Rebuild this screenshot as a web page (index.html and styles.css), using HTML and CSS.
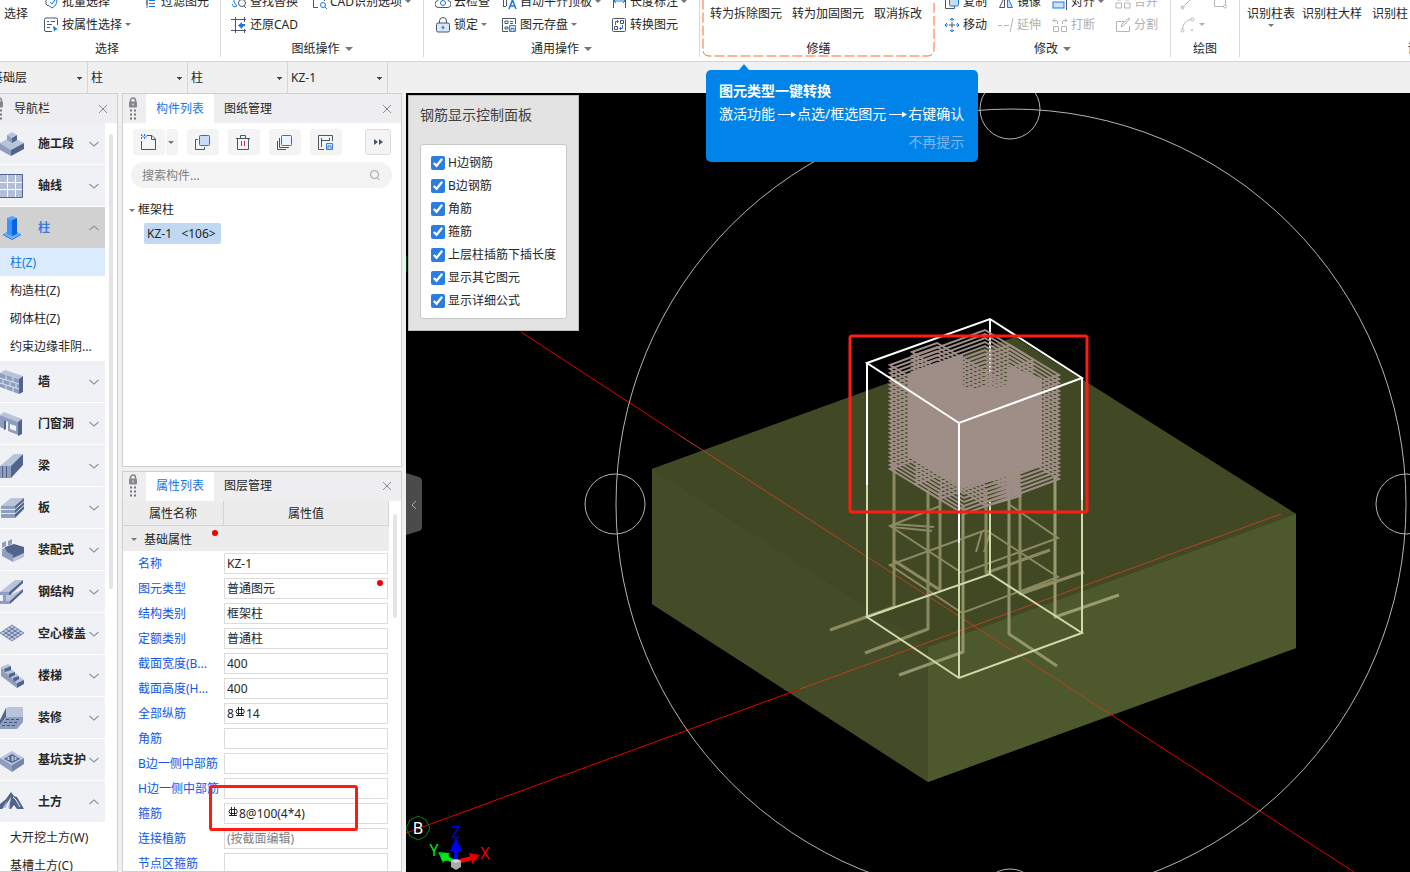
FILE: index.html
```html
<!DOCTYPE html>
<html lang="zh-CN">
<head>
  <meta charset="UTF-8">
  <meta name="viewport" content="width=device-width, initial-scale=1.0">
  <title>钢筋三维 - KZ-1</title>
  <link rel="stylesheet" href="styles.css">
</head>
<body>
  <!-- shared icons -->
  <svg class="sprite" aria-hidden="true">
    <symbol id="i-batch" viewBox="0 0 16 16"><path d="M3 4v6l2 2M5 3h4" stroke="#4a5568"/><path d="M13 4c2 4 0 8-4 10l-4-3M7 8l2 2 3-4" stroke="#1677e8"/></symbol>
    <symbol id="i-attr" viewBox="0 0 16 16"><path d="M9 14.500H3A1.500 1.500 0 0 1 1.500 13V2.500A1.500 1.500 0 0 1 3 1h10a1.500 1.500 0 0 1 1.500 1.500V8M4 4.500h2M8 4.500h4M4 7.500h5M4 10.500h3" stroke="#4a5568"/><path d="M10 8.500l5 4-2.500.3L11 15z" fill="#1677e8"/></symbol>
    <symbol id="i-filter" viewBox="0 0 16 16"><path d="M5 2v12M7 6.500h6M7 9.500h6M7 12.500h6" stroke="#1677e8"/><path d="M5 1v10" stroke="#4a5568"/></symbol>
    <symbol id="i-find" viewBox="0 0 16 16"><path d="M3 4v4l3 4M1 10l2 3 3-1" stroke="#1677e8"/><circle cx="11" cy="9" r="3.500" stroke="#4a5568"/><path d="M13 12l2 2" stroke="#4a5568"/></symbol>
    <symbol id="i-cad" viewBox="0 0 16 16"><path d="M7 13.500H2.500v-11h11V7" stroke="#4a5568"/><circle cx="12" cy="11" r="2.500" stroke="#1677e8"/><path d="M14 13l2 2" stroke="#1677e8"/></symbol>
    <symbol id="i-restore" viewBox="0 0 16 16"><path d="M4.500 0v16M0 2.500h15M0 13.500h15M13.500 0v5M13.500 12v4" stroke="#4a5568"/><path d="M7 8.500L11 5v2h3v2c-2 0-3 1-3 3z" fill="#1677e8"/></symbol>
    <symbol id="i-cloud" viewBox="0 0 16 16"><path d="M4 13.500a3.500 3.500 0 0 1-1-7 5 5 0 0 1 10 0 3.500 3.500 0 0 1-1 7z" stroke="#4a5568"/><circle cx="8" cy="9" r="2.500" stroke="#1677e8"/></symbol>
    <symbol id="i-lock" viewBox="0 0 16 16"><path d="M4.500 6V4a3.500 3.500 0 0 1 7 0v2" stroke="#4a5568"/><rect x="1.500" y="6" width="13" height="9" rx="1.500" fill="#d9e8fb" stroke="#4a5568"/><path d="M8 8.500v4M6.500 10.500h3" stroke="#1677e8"/></symbol>
    <symbol id="i-auto" viewBox="0 0 16 16"><path d="M2.500 5v7M2 12.500h3M5.500 6v6" stroke="#4a5568"/><path d="M8 15l3.500-9L15 15M9 12h5" stroke="#1677e8" stroke-width="1.500"/></symbol>
    <symbol id="i-save" viewBox="0 0 16 16"><path d="M7 14.500H1.500v-13h13V7M4 4h3v2.500H4zM4 10h3v2H4zM9 4.500h3M9 6.500h3" stroke="#4a5568"/><path d="M8.500 8.500h6v6h-6zM10 14v-2.500h3V14" fill="#cfe2fb" stroke="#3f7fd6"/></symbol>
    <symbol id="i-dim" viewBox="0 0 16 16"><path d="M2.500 3v11M14.500 3v11" stroke="#4a5568"/><path d="M3 7h11M5 5L3 7l2 2M12 5l2 2-2 2" stroke="#1677e8"/></symbol>
    <symbol id="i-convert" viewBox="0 0 16 16"><rect x="1.500" y="1.500" width="13" height="13" rx="1" stroke="#4a5568"/><path d="M9.500 3.500h3v3h-3zM3.500 9.500h3v3h-3z" stroke="#4a5568"/><path d="M4.500 8V4.500H7M6 3l1.500 1.500L6 6M11.500 8v3.500H9M10 10l-1.500 1.500L10 13" stroke="#1677e8"/></symbol>
    <symbol id="i-copy" viewBox="0 0 16 16"><path d="M5 5H1.500v9.500h9V12" stroke="#4a5568"/><rect x="5.500" y="3" width="9" height="9" rx="1.500" fill="#c9dcf8" stroke="#1677e8"/></symbol>
    <symbol id="i-move" viewBox="0 0 16 16"><path d="M8 5v6M5 8h6" stroke="#4a5568"/><path d="M8 1v3M8 12v3M1 8h3M12 8h3M6 3l2-2 2 2M6 13l2 2 2-2M3 6L1 8l2 2M13 6l2 2-2 2" stroke="#1677e8"/></symbol>
    <symbol id="i-mirror" viewBox="0 0 16 16"><path d="M6.500 3v10.500H1.500z" stroke="#4a5568"/><path d="M9.500 3v10.500h5z" fill="#cfe2fb" stroke="#1677e8"/></symbol>
    <symbol id="i-align" viewBox="0 0 16 16"><path d="M14.500 1v15" stroke="#4a5568"/><rect x="1" y="8" width="11" height="6" fill="#cfe2fb" stroke="#1677e8"/><path d="M5 5h7" stroke="#4a5568"/></symbol>
    <symbol id="i-merge" viewBox="0 0 16 16"><path d="M1 9h5.500v5H1zM9.500 9H15v5H9.500zM2 6h4M10 6h4" stroke="#b5b5b5"/></symbol>
    <symbol id="i-extend" viewBox="0 0 16 16"><path d="M0 8.500h4M6 8.500h5M15 1l-3 14" stroke="#b5b5b5"/></symbol>
    <symbol id="i-break" viewBox="0 0 16 16"><path d="M1.500 9.500h5v5h-5zM9.500 9.500h5v5h-5zM1 3.500h4M3 1.500l-2 2 2 2M5.500 7V4M11 3.500h4M13 1.500l2 2-2 2M10.500 7V4" stroke="#b5b5b5"/></symbol>
    <symbol id="i-split" viewBox="0 0 16 16"><path d="M9 4.500H1.500v10h13V9M6 10l1-3 7-6 1 1-6 6z" stroke="#b5b5b5"/></symbol>
    <symbol id="i-line" viewBox="0 0 16 16"><path d="M2 14L12 4" stroke="#b5b5b5"/><circle cx="2.500" cy="13.500" r="1.500" stroke="#b5b5b5"/></symbol>
    <symbol id="i-rect" viewBox="0 0 16 16"><path d="M2.500 3v9.500h11V3" stroke="#b5b5b5"/><circle cx="13" cy="12.500" r="1.500" fill="#fff" stroke="#b5b5b5"/></symbol>
    <symbol id="i-arc" viewBox="0 0 16 16"><path d="M2.500 12C3 7 6 3 11 2.500" stroke="#b5b5b5"/><circle cx="2.500" cy="13.500" r="1.500" stroke="#b5b5b5"/><circle cx="12.500" cy="2.500" r="1.500" stroke="#b5b5b5"/><circle cx="12" cy="13" r="1" fill="#b5b5b5"/></symbol>
    <symbol id="i-grip" viewBox="0 0 10 24"><path d="M2.500 5V3.500a2.500 2.500 0 0 1 5 0V5" stroke="#85878c" stroke-width="1.500"/><rect x="1" y="4.500" width="8" height="6" rx="1" fill="#85878c"/><path d="M5 6.500v2" stroke="#fff"/><path d="M2 13.500h2M6 13.500h2M2 17.500h2M6 17.500h2M2 21.500h2M6 21.500h2" stroke="#777" stroke-width="2"/></symbol>
    <symbol id="i-close" viewBox="0 0 10 10"><path d="M1 1l8 8M9 1L1 9" stroke="#8c8c8c"/></symbol>
    <symbol id="i-down" viewBox="0 0 10 6"><path d="M.5 1L5 5l4.500-4" stroke="#8c99b4" stroke-width="1.300"/></symbol>
    <symbol id="i-up" viewBox="0 0 10 6"><path d="M.5 5L5 1l4.500 4" stroke="#8c99b4" stroke-width="1.300"/></symbol>
    <symbol id="i-rebar" viewBox="0 0 10 10"><path d="M3.500 0v8M6.500 0v8M2 2.500h6.500M2 2.500Q0 4.500 2 6.500h6.500Q10 4.500 8.500 2.500M1 8.500h8" stroke="#222"/></symbol>
    <symbol id="i-arrow" viewBox="0 0 18 14"><path d="M0 7.500h14" stroke="#fff"/><path d="M13 4.500l5 3-5 3z" fill="#fff"/></symbol>
  </svg>

  <header class="ribbon">
    <section class="group group-select">
      <div class="group-body">
        <button class="big">选择</button>
        <div class="tools">
          <button><svg><use href="#i-batch"/></svg>批量选择</button>
          <button><svg><use href="#i-filter"/></svg>过滤图元</button>
          <button><svg><use href="#i-attr"/></svg>按属性选择<i class="caret"></i></button>
        </div>
      </div>
      <h2>选择</h2>
    </section>
    <section class="group group-drawing">
      <div class="group-body">
        <div class="tools">
          <button><svg><use href="#i-find"/></svg>查找替换</button>
          <button><svg><use href="#i-cad"/></svg>CAD识别选项<i class="caret"></i></button>
          <button><svg><use href="#i-restore"/></svg>还原CAD</button>
        </div>
      </div>
      <h2>图纸操作<i class="caret caret-lg"></i></h2>
    </section>
    <section class="group group-common">
      <div class="group-body">
        <div class="tools">
          <button><svg><use href="#i-cloud"/></svg>云检查</button>
          <button><svg><use href="#i-auto"/></svg>自动平齐顶板<i class="caret"></i></button>
          <button><svg><use href="#i-dim"/></svg>长度标注<i class="caret"></i></button>
          <button><svg><use href="#i-lock"/></svg>锁定<i class="caret"></i></button>
          <button><svg><use href="#i-save"/></svg>图元存盘<i class="caret"></i></button>
          <button><svg><use href="#i-convert"/></svg>转换图元</button>
        </div>
      </div>
      <h2>通用操作<i class="caret caret-lg"></i></h2>
    </section>
    <section class="group group-repair">
      <svg class="dash"><rect x="1" y="1" rx="6"/></svg>
      <div class="group-body">
        <button class="big">转为拆除图元</button>
        <button class="big">转为加固图元</button>
        <button class="big">取消拆改</button>
      </div>
      <h2>修缮</h2>
    </section>
    <section class="group group-modify">
      <div class="group-body">
        <div class="tools">
          <button><svg><use href="#i-copy"/></svg>复制</button>
          <button><svg><use href="#i-mirror"/></svg>镜像</button>
          <button><svg><use href="#i-align"/></svg>对齐<i class="caret"></i></button>
          <button disabled><svg><use href="#i-merge"/></svg>合并</button>
          <button><svg><use href="#i-move"/></svg>移动</button>
          <button disabled><svg><use href="#i-extend"/></svg>延伸</button>
          <button disabled><svg><use href="#i-break"/></svg>打断</button>
          <button disabled><svg><use href="#i-split"/></svg>分割</button>
        </div>
      </div>
      <h2>修改<i class="caret caret-lg"></i></h2>
    </section>
    <section class="group group-draw">
      <div class="group-body">
        <div class="tools">
          <button disabled aria-label="直线"><svg><use href="#i-line"/></svg></button>
          <button disabled aria-label="矩形"><svg><use href="#i-rect"/></svg></button>
          <button disabled aria-label="圆弧"><svg><use href="#i-arc"/></svg><i class="caret"></i></button>
        </div>
      </div>
      <h2>绘图</h2>
    </section>
    <section class="group group-detect">
      <div class="group-body">
        <button class="big has-menu">识别柱表<i class="caret"></i></button>
        <button class="big">识别柱大样</button>
        <button class="big last">识别柱</button>
      </div>
      <h2>识别柱</h2>
    </section>
  </header>

  <div class="filters">
    <select aria-label="楼层"><option>基础层</option></select>
    <select aria-label="构件大类"><option>柱</option></select>
    <select aria-label="构件类型"><option>柱</option></select>
    <select aria-label="构件"><option>KZ-1</option></select>
  </div>

  <main>
    <nav class="nav">
      <div class="panel-head nav-head">
        <svg class="grip"><use href="#i-grip"/></svg>
        <span class="nav-title">导航栏</span>
        <button class="close" aria-label="关闭"><svg><use href="#i-close"/></svg></button>
      </div>
      <div class="nav-scroll">
        <div class="nav-list">
          <button class="cat"><svg class="pic" viewBox="0 0 24 24"><path d="M0 11l11-6 13 6-13 7z" fill="#b9c3d9"/><path d="M0 11l11 7v6L0 18z" fill="#8f9ebf"/><path d="M24 11l-13 7v6l13-7z" fill="#50648c"/><path d="M7 3l5-3 5 3-5 3z" fill="#b9c3d9"/><path d="M7 3l5 3v5L7 8z" fill="#8f9ebf"/><path d="M17 3l-5 3v5l5-3z" fill="#50648c"/></svg><span>施工段</span><svg class="chev"><use href="#i-down"/></svg></button>
          <button class="cat"><svg class="pic" viewBox="0 0 24 24"><path d="M0 0h23v24H0z" fill="#b3bfd8"/><path d="M7.500 0v23M15.500 0v23M0 8.500h22M0 15.500h22" stroke="#fff"/><path d="M0 .5h22.500v23H0" stroke="#50648c" fill="none"/></svg><span>轴线</span><svg class="chev"><use href="#i-down"/></svg></button>
          <button class="cat active"><svg class="pic" viewBox="0 0 24 24"><path d="M3 18l9-5 9 5-9 5z" fill="#68b0ff"/><path d="M3 18l9 5 9-5v1l-9 5-9-5z" fill="#1473e6"/><path d="M7 2l5-2 5 2-5 2z" fill="#55a5ff"/><path d="M7 2l5 2v16l-5-2z" fill="#3a94ff"/><path d="M17 2l-5 2v16l5-2z" fill="#0d65dc"/></svg><span>柱</span><svg class="chev"><use href="#i-up"/></svg></button>
          <a href="#" class="sub current">柱(Z)</a>
          <a href="#" class="sub">构造柱(Z)</a>
          <a href="#" class="sub">砌体柱(Z)</a>
          <a href="#" class="sub">约束边缘非阴...</a>
          <button class="cat"><svg class="pic" viewBox="0 0 24 24"><path d="M0 3l5-3 18 6-4 3z" fill="#b9c3d9"/><path d="M0 3l19 6v15L0 17z" fill="#8f9ebf"/><path d="M23 6l-4 3v15l4-2z" fill="#50648c"/><path d="M0 8l19 6M0 13l19 6M6 5v5M13 7v5M3 9v5M10 12v5M16 14v4M6 15v5M13 17v5" stroke="#dbe1ee" fill="none"/></svg><span>墙</span><svg class="chev"><use href="#i-down"/></svg></button>
          <button class="cat"><svg class="pic" viewBox="0 0 24 24"><path d="M0 3l4-3 18 7-4 3z" fill="#b9c3d9"/><path d="M0 3l18 7v13L8 19v-9l-4-2v9l-4-2z" fill="#8f9ebf"/><path d="M22 7l-4 3v14l4-2z" fill="#50648c"/><path d="M10 12l6 2v5l-6-2z" fill="#eff1f6"/><path d="M4 8l2 1v8l-2 1z" fill="#50648c"/></svg><span>门窗洞</span><svg class="chev"><use href="#i-down"/></svg></button>
          <button class="cat"><svg class="pic" viewBox="0 0 24 24"><path d="M0 12L14 0h9L11 12z" fill="#b9c3d9"/><path d="M11 12L23 0v11L11 24z" fill="#50648c"/><path d="M0 12h11v12H0z" fill="#8f9ebf"/><path d="M2.500 12v12M6.500 12v12" stroke="#50648c"/></svg><span>梁</span><svg class="chev"><use href="#i-down"/></svg></button>
          <button class="cat"><svg class="pic" viewBox="0 0 24 24"><path d="M1 10l10-8h13l-9 8z" fill="#b9c3d9"/><path d="M1 10h14v12H1z" fill="#8f9ebf"/><path d="M15 10l9-8v11l-9 9z" fill="#50648c"/><path d="M1 13.500h14l9-8M1 17.500h14l9-8" stroke="#e6eaf3" fill="none"/></svg><span>板</span><svg class="chev"><use href="#i-down"/></svg></button>
          <button class="cat"><svg class="pic" viewBox="0 0 24 24"><path d="M5 9l9-3 10 3v8l-11 4-9-6z" fill="#50648c"/><path d="M2 11l3-1 2 4 6 3v7L2 18z" fill="#8f9ebf"/><path d="M13 20l11-5v4l-11 5z" fill="#b9c3d9"/><path d="M2 5l4-2v5l-4 2zM8 3l4-2v5L8 8z" fill="#8f9ebf"/></svg><span>装配式</span><svg class="chev"><use href="#i-down"/></svg></button>
          <button class="cat"><svg class="pic" viewBox="0 0 24 24"><path d="M0 12L15 0h8L8 13z" fill="#b9c3d9"/><path d="M8 13L23 0v3L11 14v1H8z" fill="#50648c"/><path d="M6 15h4L23 9l-13 13H6z" fill="#b9c3d9"/><path d="M0 12h9v3H6v6h4v3H0v-3h3v-6H0z" fill="#8f9ebf"/><path d="M23 9v3L10 24v-3z" fill="#50648c"/></svg><span>钢结构</span><svg class="chev"><use href="#i-down"/></svg></button>
          <button class="cat"><svg class="pic" viewBox="0 0 24 24"><path d="M0 11l12-8 12 8-12 8z" fill="#b9c3d9" stroke="#8492b3"/><path d="M3 9l12 8M6 7l12 8M9 5l12 8M3 13l12-8M6 15l12-8M9 17l12-8" stroke="#64759c" fill="none"/></svg><span>空心楼盖</span><svg class="chev"><use href="#i-down"/></svg></button>
          <button class="cat"><svg class="pic" viewBox="0 0 24 24"><path d="M1 3l2 2 4 4 4 4 4 4 2 2v5L1 12z" fill="#8f9ebf"/><path d="M1 3l7-3 3 2-7 4zM4 8l7-3 4 3-6 3zM9 12l7-3 3 3-6 3zM13 16l7-3 4 3-7 3z" fill="#b9c3d9"/><path d="M4 5l7-3v4L5 8zM9 10l6-2v3l-6 3zM13 14l6-2v3l-5 3zM17 19l7-3v4l-7 4z" fill="#50648c"/></svg><span>楼梯</span><svg class="chev"><use href="#i-down"/></svg></button>
          <button class="cat"><svg class="pic" viewBox="0 0 24 24"><path d="M5 3l3-2h15v11H5z" fill="#b9c3d9"/><path d="M6 2v9l-6 8v-5z" fill="#50648c"/><path d="M0 19l6-8h17v5l-6 7H0z" fill="#8f9ebf"/><path d="M6 13.500h3M11 13.500h3M16 13.500h3M4 16.500h3M9 16.500h3M14 16.500h3M2 19.500h3M7 19.500h3M12 19.500h3" stroke="#3f527c"/></svg><span>装修</span><svg class="chev"><use href="#i-down"/></svg></button>
          <button class="cat"><svg class="pic" viewBox="0 0 24 24"><path d="M0 10l12-7 12 7-12 7z" fill="#b9c3d9"/><path d="M0 10l12 7v7L0 16z" fill="#8f9ebf"/><path d="M24 10l-12 7v7l12-8z" fill="#7384a9"/><path d="M4 11l8-5 8 5-8 4z" fill="#50648c"/><path d="M8.500 12V9M12.500 13V8M15.500 12V9" stroke="#b9c3d9" stroke-width="2"/></svg><span>基坑支护</span><svg class="chev"><use href="#i-down"/></svg></button>
          <button class="cat"><svg class="pic" viewBox="0 0 24 24"><path d="M0 14l6-5 5-7 3 4 3 1 7 12h-7l-3-4-3 4H9l2-12-5 8-4 4H0z" fill="#50648c"/><path d="M3 17l4-6-1 7zM8 18l2-8v9z" fill="#a9b5ce"/><path d="M13 7l3 3 4 7" stroke="#eff1f6" fill="none"/></svg><span>土方</span><svg class="chev"><use href="#i-up"/></svg></button>
          <a href="#" class="sub">大开挖土方(W)</a>
          <a href="#" class="sub">基槽土方(C)</a>
        </div>
        <div class="scroll-thumb"></div>
      </div>
    </nav>

    <div class="panels">
      <section class="panel components">
        <div class="panel-head">
          <svg class="grip"><use href="#i-grip"/></svg>
          <button class="tab selected">构件列表</button>
          <button class="tab">图纸管理</button>
          <button class="close" aria-label="关闭"><svg><use href="#i-close"/></svg></button>
        </div>
        <div class="toolbar">
          <div class="split">
            <button aria-label="新建"><svg viewBox="0 0 16 16"><path d="M1.500 7v8.500h14V5L12 1.500H7M11.500 1.500v4h4" stroke="#4a5568"/><path d="M1 1h1M4 1h1M2.500 2.500h1M1 4h1M4 4h1M5.500 2.500h1" stroke="#1677e8" stroke-width="2"/></svg></button>
            <button class="more" aria-label="新建选项"><i class="caret"></i></button>
          </div>
          <button aria-label="复制"><svg viewBox="0 0 16 16"><path d="M4 5.500H1.500v10h9V13" stroke="#4a5568"/><rect x="5.500" y="1.500" width="10" height="10" rx="1" fill="#c9dcf8" stroke="#1677e8"/></svg></button>
          <button aria-label="删除"><svg viewBox="0 0 16 16"><path d="M1 4.500h14M5.500 4V1.500h5V4M2.500 5v10.500h11V5" stroke="#4a5568"/><path d="M6.500 7v5M9.500 7v5" stroke="#d9232e"/></svg></button>
          <button aria-label="层间复制"><svg viewBox="0 0 16 16"><path d="M3.500 4v9.500H13M1.500 7v8.500H10" stroke="#4a5568"/><rect x="5.500" y="1.500" width="10" height="10" rx="1" fill="#eaf3ff" stroke="#1677e8"/></svg></button>
          <button aria-label="存档"><svg viewBox="0 0 16 16"><path d="M7 15.500H1.500v-14h14V7M4.500 4v9M4.500 6.500h8M12.500 4v3" stroke="#4a5568"/><path d="M9.500 9.500h6v6h-6zM11 15v-3h3v3" fill="#cfe2fb" stroke="#3f7fd6"/></svg></button>
          <button class="expand" aria-label="更多"><svg viewBox="0 0 16 16"><path d="M4 5l4 3-4 3zM9 5l4 3-4 3z" fill="#4a5568"/></svg></button>
        </div>
        <div class="search">
          <input type="text" placeholder="搜索构件..." aria-label="搜索构件">
          <svg viewBox="0 0 12 12"><circle cx="5.500" cy="5.500" r="4" stroke="#999"/><path d="M8 8.500l2.500 2.500" stroke="#999"/></svg>
        </div>
        <ul class="tree">
          <li><i class="caret"></i>框架柱
            <ul><li><button>KZ-1 &nbsp;&nbsp;&lt;106&gt;</button></li></ul>
          </li>
        </ul>
      </section>

      <section class="panel props">
        <div class="panel-head">
          <svg class="grip"><use href="#i-grip"/></svg>
          <button class="tab selected">属性列表</button>
          <button class="tab">图层管理</button>
          <button class="close" aria-label="关闭"><svg><use href="#i-close"/></svg></button>
        </div>
        <div class="props-scroll">
          <table>
            <thead>
              <tr><th>属性名称</th><th>属性值</th></tr>
            </thead>
            <tbody>
              <tr class="section"><td colspan="2"><i class="caret"></i>基础属性<b class="dot"></b></td></tr>
              <tr><td><label for="p1">名称</label></td><td><div class="field"><input id="p1" value="KZ-1"></div></td></tr>
              <tr><td><label for="p2">图元类型</label></td><td><div class="field"><input id="p2" value="普通图元"><b class="dot"></b></div></td></tr>
              <tr><td><label for="p3">结构类别</label></td><td><div class="field"><input id="p3" value="框架柱"></div></td></tr>
              <tr><td><label for="p4">定额类别</label></td><td><div class="field"><input id="p4" value="普通柱"></div></td></tr>
              <tr><td><label for="p5">截面宽度(B...</label></td><td><div class="field"><input id="p5" value="400"></div></td></tr>
              <tr><td><label for="p6">截面高度(H...</label></td><td><div class="field"><input id="p6" value="400"></div></td></tr>
              <tr><td><label for="p7">全部纵筋</label></td><td><div class="field">8<svg class="rebar"><use href="#i-rebar"/></svg><input id="p7" value="14"></div></td></tr>
              <tr><td><label for="p8">角筋</label></td><td><div class="field"><input id="p8"></div></td></tr>
              <tr><td><label for="p9">B边一侧中部筋</label></td><td><div class="field"><input id="p9"></div></td></tr>
              <tr><td><label for="p10">H边一侧中部筋</label></td><td><div class="field"><input id="p10"></div></td></tr>
              <tr><td><label for="p11">箍筋</label></td><td class="marked"><div class="field"><svg class="rebar"><use href="#i-rebar"/></svg><input id="p11" value="8@100(4*4)"></div></td></tr>
              <tr><td><label for="p12">连接植筋</label></td><td><div class="field"><input id="p12" placeholder="(按截面编辑)"></div></td></tr>
              <tr><td><label for="p13">节点区箍筋</label></td><td><div class="field"><input id="p13"></div></td></tr>
            </tbody>
          </table>
          <div class="scroll-thumb"></div>
        </div>
      </section>
    </div>

    <div class="viewport">
      <svg class="scene" viewBox="406 93 1004 779" preserveAspectRatio="xMinYMin slice" fill="none">
        <!-- foundation -->
        <path d="M652 469L1015 337L1296 514V648L928 782L652 604z" fill="#424a26"/>
        <path d="M652 469L1015 337L1296 514L928 647z" fill="#404924"/>
        <path d="M652 469L928 647V782L652 604z" fill="#434b27"/>
        <path d="M928 647L1296 514V648L928 782z" fill="#4d582d"/>

        <!-- axes -->
        <g stroke="#e60000">
          <path d="M406 833L800 689M521 332L679 435"/>
          <path d="M1110 714L1354 872"/>
        </g>
        <path d="M800 689L1281 514M679 435L1110 714" stroke="#b5431f"/>
        <path d="M652 604L928 782V700L652 560z" fill="#434b27" opacity="0"/>

        <!-- orbit -->
        <g stroke="#b4b4b4">
          <circle cx="1011" cy="504" r="395"/>
          <circle cx="615" cy="504" r="30"/>
          <circle cx="1010" cy="109" r="30"/>
          <circle cx="1406" cy="504" r="30"/>
          <circle cx="1010" cy="899" r="30"/>
        </g>

        <!-- longitudinal bars -->
        <g stroke="#8c8a60" stroke-width="3" stroke-linejoin="round">
          <path d="M894 465V607L830 630"/>
          <path d="M928 490V629L865 653"/>
          <path d="M940 490V590L893 560"/>
          <path d="M986 490V573L1050 550"/>
          <path d="M1020 490V594L1084 572"/>
          <path d="M963 505V652L899 675" stroke="#92946a"/>
          <path d="M1009 490V634L1057 666" stroke="#92946a"/>
          <path d="M1055 475V617L1119 595" stroke="#989b6c"/>
        </g>
        <g stroke="#8c8a60" stroke-width="2">
          <path d="M940 506L890 526L962 573L1058 538L1010 505"/>
          <path d="M986 530L890 565L962 613L1058 577z"/>
          <path d="M892 524L934 527M892 527L932 531M982 531L976 552M990 533L984 552M1020 592L1058 580"/>
        </g>

        <!-- column outline -->
        <g stroke="#cddbaa" stroke-width="2">
          <path d="M867 617L990 574L1082 633L959 678z"/>
          <path d="M867 480V617M1082 490V633M959 520V678M990 500V574"/>
        </g>
        <path d="M990 319V400" stroke="#fff" stroke-width="2"/>

        <!-- stirrups, filled in by the script below -->
        <path d="M908 374L963 354V388H1007V366L1042 378V466L963 488L908 455z" fill="#9f8e87"/>
        <g id="stirrups" stroke="#9f8e87" stroke-width="2"></g>

        <g stroke="#fff" stroke-width="2">
          <path d="M867 363L990 319L1082 378L959 423z"/>
          <path d="M867 363V485M1082 378V500M959 423V543"/>
        </g>

        <rect x="850" y="336" width="237" height="176" rx="2" stroke="#ff1a12" stroke-width="3"/>

        <!-- grid bubble and axis triad -->
        <path d="M406 256v16" stroke="#0a7d18"/>
        <path d="M418 816l8 4 4 8-4 8-8 4-8-4-4-8 4-8z" stroke="#0a7d18"/>
        <text x="418" y="834" class="bubble">B</text>
        <path d="M456 862L444 857" stroke="#00e818" stroke-width="4"/>
        <path d="M438 852l12 1-7 10z" fill="#00c814"/>
        <circle cx="445" cy="857" r="4" fill="#00e818"/>
        <path d="M456 862L472 858" stroke="#f00" stroke-width="4"/>
        <path d="M480 855l-11-2 3 11z" fill="#e00000"/>
        <path d="M456 862V850" stroke="#00f" stroke-width="4"/>
        <path d="M456 837l6 14h-12z" fill="#0000f0"/>
        <path d="M451 861l5-2 5 2v6l-5 3-5-3z" fill="#aaa"/>
        <path d="M451 861l5 2 5-2-5-2z" fill="#d4d4d4"/>
        <text x="456" y="838" class="axis axis-z">Z</text>
        <text x="434" y="856" class="axis axis-y">Y</text>
        <text x="485" y="859" class="axis axis-x">X</text>
      </svg>

      <button class="handle" aria-label="收起面板"><svg viewBox="0 0 16 62"><path d="M0 0l13 4q3 1 3 4v46q0 3-3 4L0 62z" fill="#4b4b4b"/><path d="M10 28l-4 4 4 4" stroke="#aaa"/></svg></button>

      <fieldset class="rebar-panel">
        <legend>钢筋显示控制面板</legend>
        <div class="checks">
          <label><input type="checkbox" checked>H边钢筋</label>
          <label><input type="checkbox" checked>B边钢筋</label>
          <label><input type="checkbox" checked>角筋</label>
          <label><input type="checkbox" checked>箍筋</label>
          <label><input type="checkbox" checked>上层柱插筋下插长度</label>
          <label><input type="checkbox" checked>显示其它图元</label>
          <label><input type="checkbox" checked>显示详细公式</label>
        </div>
      </fieldset>
    </div>
  </main>

  <aside class="tip">
    <strong>图元类型一键转换</strong>
    <p>激活功能<svg><use href="#i-arrow"/></svg>点选/框选图元<svg><use href="#i-arrow"/></svg>右键确认</p>
    <button>不再提示</button>
  </aside>

  <script>
    // 4x4 stirrup: one outer loop and two inner loops, repeated down the column
    const loops = [
      'M890 365L985 330L1059 375L964 410z',
      'M912 352L937 343L1020 392L986 402z',
      'M915 380L1010 345L1034 360L939 395z'
    ];
    const group = document.getElementById('stirrups');
    for (let i = 0; i < 27; i++) {
      loops.forEach(d => {
        const path = document.createElementNS('http://www.w3.org/2000/svg', 'path');
        path.setAttribute('d', d);
        path.setAttribute('transform', `translate(0 ${i * 4})`);
        group.appendChild(path);
      });
    }
  </script>
</body>
</html>
```

FILE: styles.css
```css
*, *::before, *::after {
  box-sizing: border-box;
}
body {
  margin: 0;
  height: 100vh;
  display: flex;
  flex-direction: column;
  overflow: hidden;
  position: relative;
  background: #fff;
  color: #262626;
  font: 12px/18px "Noto Sans", "Noto Sans CJK SC", sans-serif;
}
button, input, select {
  font: inherit;
  color: inherit;
  border: 0;
  padding: 0;
  margin: 0;
  background: none;
}
button {
  white-space: nowrap;
}
svg {
  fill: none;
  flex: none;
}
.sprite {
  display: none;
}
.caret {
  flex: none;
  width: 0;
  height: 0;
  border: 3px solid transparent;
  border-top-color: #777;
  border-bottom: 0;
}
.caret-lg {
  border-width: 4px 4px 0;
  margin-left: 4px;
}

/* ribbon */
.ribbon {
  flex: none;
  height: 62px;
  display: flex;
  align-items: flex-end;
  overflow: hidden;
  border-bottom: 1px solid #d5d5d5;
}
.group {
  flex: none;
  display: flex;
  flex-direction: column;
  margin-bottom: 4px;
  border-right: 1px solid #d9d9d9;
}
.group h2 {
  height: 21px;
  margin: 0;
  padding-top: 5px;
  display: flex;
  align-items: center;
  justify-content: center;
  gap: 0 1px;
  font-size: 12px;
  font-weight: 400;
}
.group-body {
  height: 46px;
  display: flex;
  align-items: center;
}
.big {
  padding-top: 2px;
}
.tools {
  display: grid;
  grid-auto-rows: 23px;
}
.tools button {
  display: flex;
  align-items: center;
  gap: 3px;
}
.tools svg {
  width: 16px;
  height: 16px;
}
.tools button:disabled {
  color: #b0b0b0;
}
.tools button:disabled .caret {
  border-top-color: #b0b0b0;
}
.group-select {
  width: 221px;
}
.group-select h2 {
  padding-right: 6px;
}
.group-select .group-body {
  padding-left: 4px;
  gap: 15px;
}
.group-select .tools {
  grid-template-columns: 99px auto;
}
.group-drawing {
  width: 203px;
}
.group-drawing .group-body {
  padding-left: 10px;
}
.group-drawing .tools {
  grid-template-columns: 80px auto;
}
.group-common {
  width: 276px;
}
.group-common .group-body {
  padding-left: 11px;
}
.group-common .tools {
  grid-template-columns: 66px 110px auto;
}
.group-repair {
  position: relative;
  width: 233px;
  margin-left: 2px;
  border: 0;
}
.group-repair .group-body {
  padding-left: 8px;
  gap: 10px;
}
.dash {
  position: absolute;
  left: 0;
  top: 0;
  width: 100%;
  height: 100%;
  pointer-events: none;
}
.dash rect {
  width: calc(100% - 2px);
  height: calc(100% - 2px);
  stroke: #ff6a2a;
  stroke-dasharray: 10 3;
}
.group-modify {
  width: 236px;
}
.group-modify .group-body {
  padding-left: 9px;
}
.group-modify .tools {
  grid-template-columns: 54px 54px 63px auto;
}
.group-draw {
  width: 69px;
}
.group-draw .group-body {
  padding-left: 9px;
}
.group-draw .tools {
  grid-template-columns: 32px auto;
}
.group-detect {
  width: 372px;
}
.group-detect .group-body {
  padding-left: 7px;
  gap: 7px;
}
.has-menu {
  position: relative;
}
.has-menu .caret {
  position: absolute;
  left: 21px;
  top: 21px;
}
.last {
  margin-left: 3px;
}

/* filter bar */
.filters {
  flex: none;
  height: 31px;
  display: flex;
  background: #f0f0f0;
}
.filters select {
  appearance: none;
  width: 100px;
  padding: 1px 3px 0;
  border-right: 1px solid #d5d5d5;
  background: linear-gradient(#444, #444) 89px 15px / 5px 1px no-repeat, linear-gradient(#444, #444) 90px 16px / 3px 1px no-repeat, linear-gradient(#444, #444) 91px 17px / 1px 1px no-repeat;
}
.filters select:first-child {
  margin-left: -12px;
}

main {
  flex: 1;
  min-height: 0;
  display: flex;
  background: #f0f0f0;
}
.panel-head {
  flex: none;
  height: 29px;
  display: flex;
  align-items: center;
  background: #eeeef0;
}
.grip {
  width: 10px;
  height: 24px;
}
.close {
  margin-left: auto;
  width: 10px;
  height: 10px;
}
.close svg, .pic, .chev {
  display: block;
}
.close svg {
  width: 10px;
  height: 10px;
}
.scroll-thumb {
  width: 4px;
  border-radius: 2px;
  background: #e4e4e4;
}

/* navigation */
.nav {
  flex: none;
  width: 118px;
  display: flex;
  flex-direction: column;
  overflow: hidden;
  background: #fff;
  border: 1px solid #d0d0d0;
  border-left: 0;
}
.nav-head {
  padding-right: 9px;
}
.nav-head .grip {
  margin-left: -6px;
}
.nav-title {
  margin-left: 10px;
}
.nav-scroll {
  flex: 1;
  min-height: 0;
  display: flex;
  gap: 4px;
}
.nav-scroll .scroll-thumb {
  height: 455px;
  margin-top: 11px;
}
.nav-list {
  width: 105px;
}
.cat {
  width: 100%;
  height: 42px;
  display: flex;
  align-items: center;
  padding-right: 6px;
  border-bottom: 1px solid #fff;
  background: #eff1f5;
  font-weight: 700;
}
.cat span {
  margin: 0 auto 0 14px;
}
.pic {
  width: 24px;
  height: 24px;
}
.chev {
  width: 10px;
  height: 6px;
}
.cat.active {
  height: 41px;
  border: 0;
  background: #d1d1d1;
  color: #3a7be0;
}
.sub {
  display: block;
  height: 28px;
  padding-left: 10px;
  line-height: 30px;
  white-space: nowrap;
  color: #262626;
  text-decoration: none;
}
.sub + .cat {
  margin-top: 1px;
}
.sub.current {
  background: #dbebfe;
  color: #0b78ea;
}

/* docked panels */
.panels {
  flex: none;
  width: 280px;
  margin: 0 4px;
  display: flex;
  flex-direction: column;
  gap: 4px;
}
.panel {
  display: flex;
  flex-direction: column;
  background: #fff;
  border: 1px solid #d0d0d0;
}
.panels .panel-head {
  padding: 0 9px 0 5px;
}
.tab {
  align-self: stretch;
  padding: 0 10px;
}
.grip + .tab {
  margin-left: 8px;
}
.tab.selected {
  background: #fff;
  color: #1677e8;
}
.components {
  flex: none;
  height: 48%;
}
.toolbar {
  display: flex;
  gap: 9px;
  padding: 6px 10px 0;
}
.toolbar button {
  width: 32px;
  height: 26px;
  display: flex;
  align-items: center;
  justify-content: center;
  padding-right: 2px;
  border-radius: 3px;
  background: #f4f4f4;
}
.toolbar svg {
  width: 16px;
  height: 16px;
}
.split {
  display: flex;
  gap: 1px;
}
.toolbar .more {
  width: 12px;
}
.toolbar .expand {
  width: 26px;
  margin-left: auto;
  padding: 0;
  border: 1px solid #dcdcdc;
}
.search {
  height: 26px;
  margin: 7px 9px 0 8px;
  padding: 0 11px;
  display: flex;
  align-items: center;
  border-radius: 13px;
  background: #f3f3f3;
}
.search input {
  flex: 1;
  min-width: 0;
  padding-top: 2px;
}
.search svg {
  width: 12px;
  height: 12px;
}
::placeholder {
  color: #808080;
  opacity: 1;
}
.tree, .tree ul {
  list-style: none;
  margin: 0;
  padding: 0;
}
.tree {
  padding: 13px 6px;
}
.tree .caret {
  display: inline-block;
  margin-right: 3px;
  vertical-align: 2px;
}
.tree ul {
  padding: 4px 0 0 15px;
}
.tree button {
  height: 21px;
  padding: 0 5px 0 3px;
  border-radius: 2px;
  background: #c0d8f2;
}
.props {
  flex: 1;
  min-height: 0;
}
.props-scroll {
  flex: 1;
  min-height: 0;
  display: flex;
  gap: 4px;
  overflow: hidden;
}
.props-scroll .scroll-thumb {
  height: 104px;
  margin-top: 13px;
}
.props table {
  flex: none;
  align-self: flex-start;
  width: 266px;
  border-collapse: separate;
  border-spacing: 0;
  table-layout: fixed;
}
.props th {
  height: 25px;
  padding: 2px 0 0;
  background: #ececec;
  border: solid #d5d5d5;
  border-width: 0 1px 1px 0;
  font-weight: 400;
}
.props th:first-child {
  width: 101px;
}
.props td {
  height: 25px;
  padding: 0 1px 0 0;
  white-space: nowrap;
}
.props td:first-child {
  padding-top: 2px;
  padding-left: 15px;
  color: #1156f0;
}
.props .section td:first-child {
  padding-left: 8px;
  background: #ececec;
  color: #262626;
}
.section .caret {
  display: inline-block;
  margin-right: 7px;
  vertical-align: 3px;
}
.dot {
  display: inline-block;
  flex: none;
  width: 6px;
  height: 6px;
  border-radius: 50%;
  background: #f00000;
}
.section .dot {
  margin-left: 20px;
  vertical-align: 8px;
}
.field {
  height: 21px;
  display: flex;
  align-items: center;
  padding: 1px 4px 0 2px;
  border: 1px solid #dcdcdc;
  background: #fff;
}
.field input {
  flex: 1;
  min-width: 0;
}
.field .dot {
  margin-bottom: 11px;
}
.rebar {
  width: 10px;
  height: 10px;
  margin: 0 1px 4px;
}
.marked {
  position: relative;
}
.marked::after {
  content: "";
  position: absolute;
  left: -15px;
  top: -16px;
  width: 149px;
  height: 46px;
  border: 3px solid #ff1a12;
  border-radius: 3px;
  pointer-events: none;
}

/* 3D view */
.viewport {
  flex: 1;
  min-width: 0;
  position: relative;
  overflow: hidden;
  background: #000;
}
.scene {
  display: block;
  width: 100%;
  height: 100%;
}
.bubble {
  fill: #fff;
  font-size: 16px;
  text-anchor: middle;
}
.axis {
  font-size: 16px;
  text-anchor: middle;
}
.axis-x {
  fill: #f00000;
}
.axis-y {
  fill: #00e818;
}
.axis-z {
  fill: #0000f0;
}
.handle {
  position: absolute;
  left: 0;
  top: 380px;
  width: 16px;
  height: 62px;
}
.handle svg {
  display: block;
}
.rebar-panel {
  position: absolute;
  left: 2px;
  top: 2px;
  margin: 0;
  padding: 9px 11px 11px;
  border: 1px solid #bdbdbd;
  background: #e3e3e3;
}
.rebar-panel legend {
  float: left;
  width: 100%;
  padding: 0;
  margin-bottom: 19px;
  font-size: 14px;
  line-height: 20px;
  color: #404040;
}
.checks {
  clear: both;
  padding: 6px 10px;
  border: 1px solid #c8c8c8;
  border-radius: 3px;
  background: #fff;
}
.checks label {
  height: 23px;
  display: flex;
  align-items: center;
  gap: 3px;
  white-space: nowrap;
}
.checks input {
  width: 14px;
  height: 14px;
  accent-color: #2b7de0;
}

/* hint */
.tip {
  position: absolute;
  left: 706px;
  top: 70px;
  display: flex;
  flex-direction: column;
  padding: 10px 14px 9px 13px;
  border-radius: 5px;
  background: #0084e9;
  color: #fff;
  font-size: 14px;
  line-height: 22px;
}
.tip::before {
  content: "";
  position: absolute;
  left: 33px;
  top: -6px;
  border: 5px solid transparent;
  border-top: 0;
  border-bottom: 6px solid #0084e9;
}
.tip p {
  display: flex;
  align-items: center;
  margin: 1px 0 6px;
  white-space: nowrap;
}
.tip p svg {
  width: 18px;
  height: 14px;
  margin: 0 1px 0 3px;
}
.tip button {
  align-self: flex-end;
  color: #7fb5ee;
}
```
